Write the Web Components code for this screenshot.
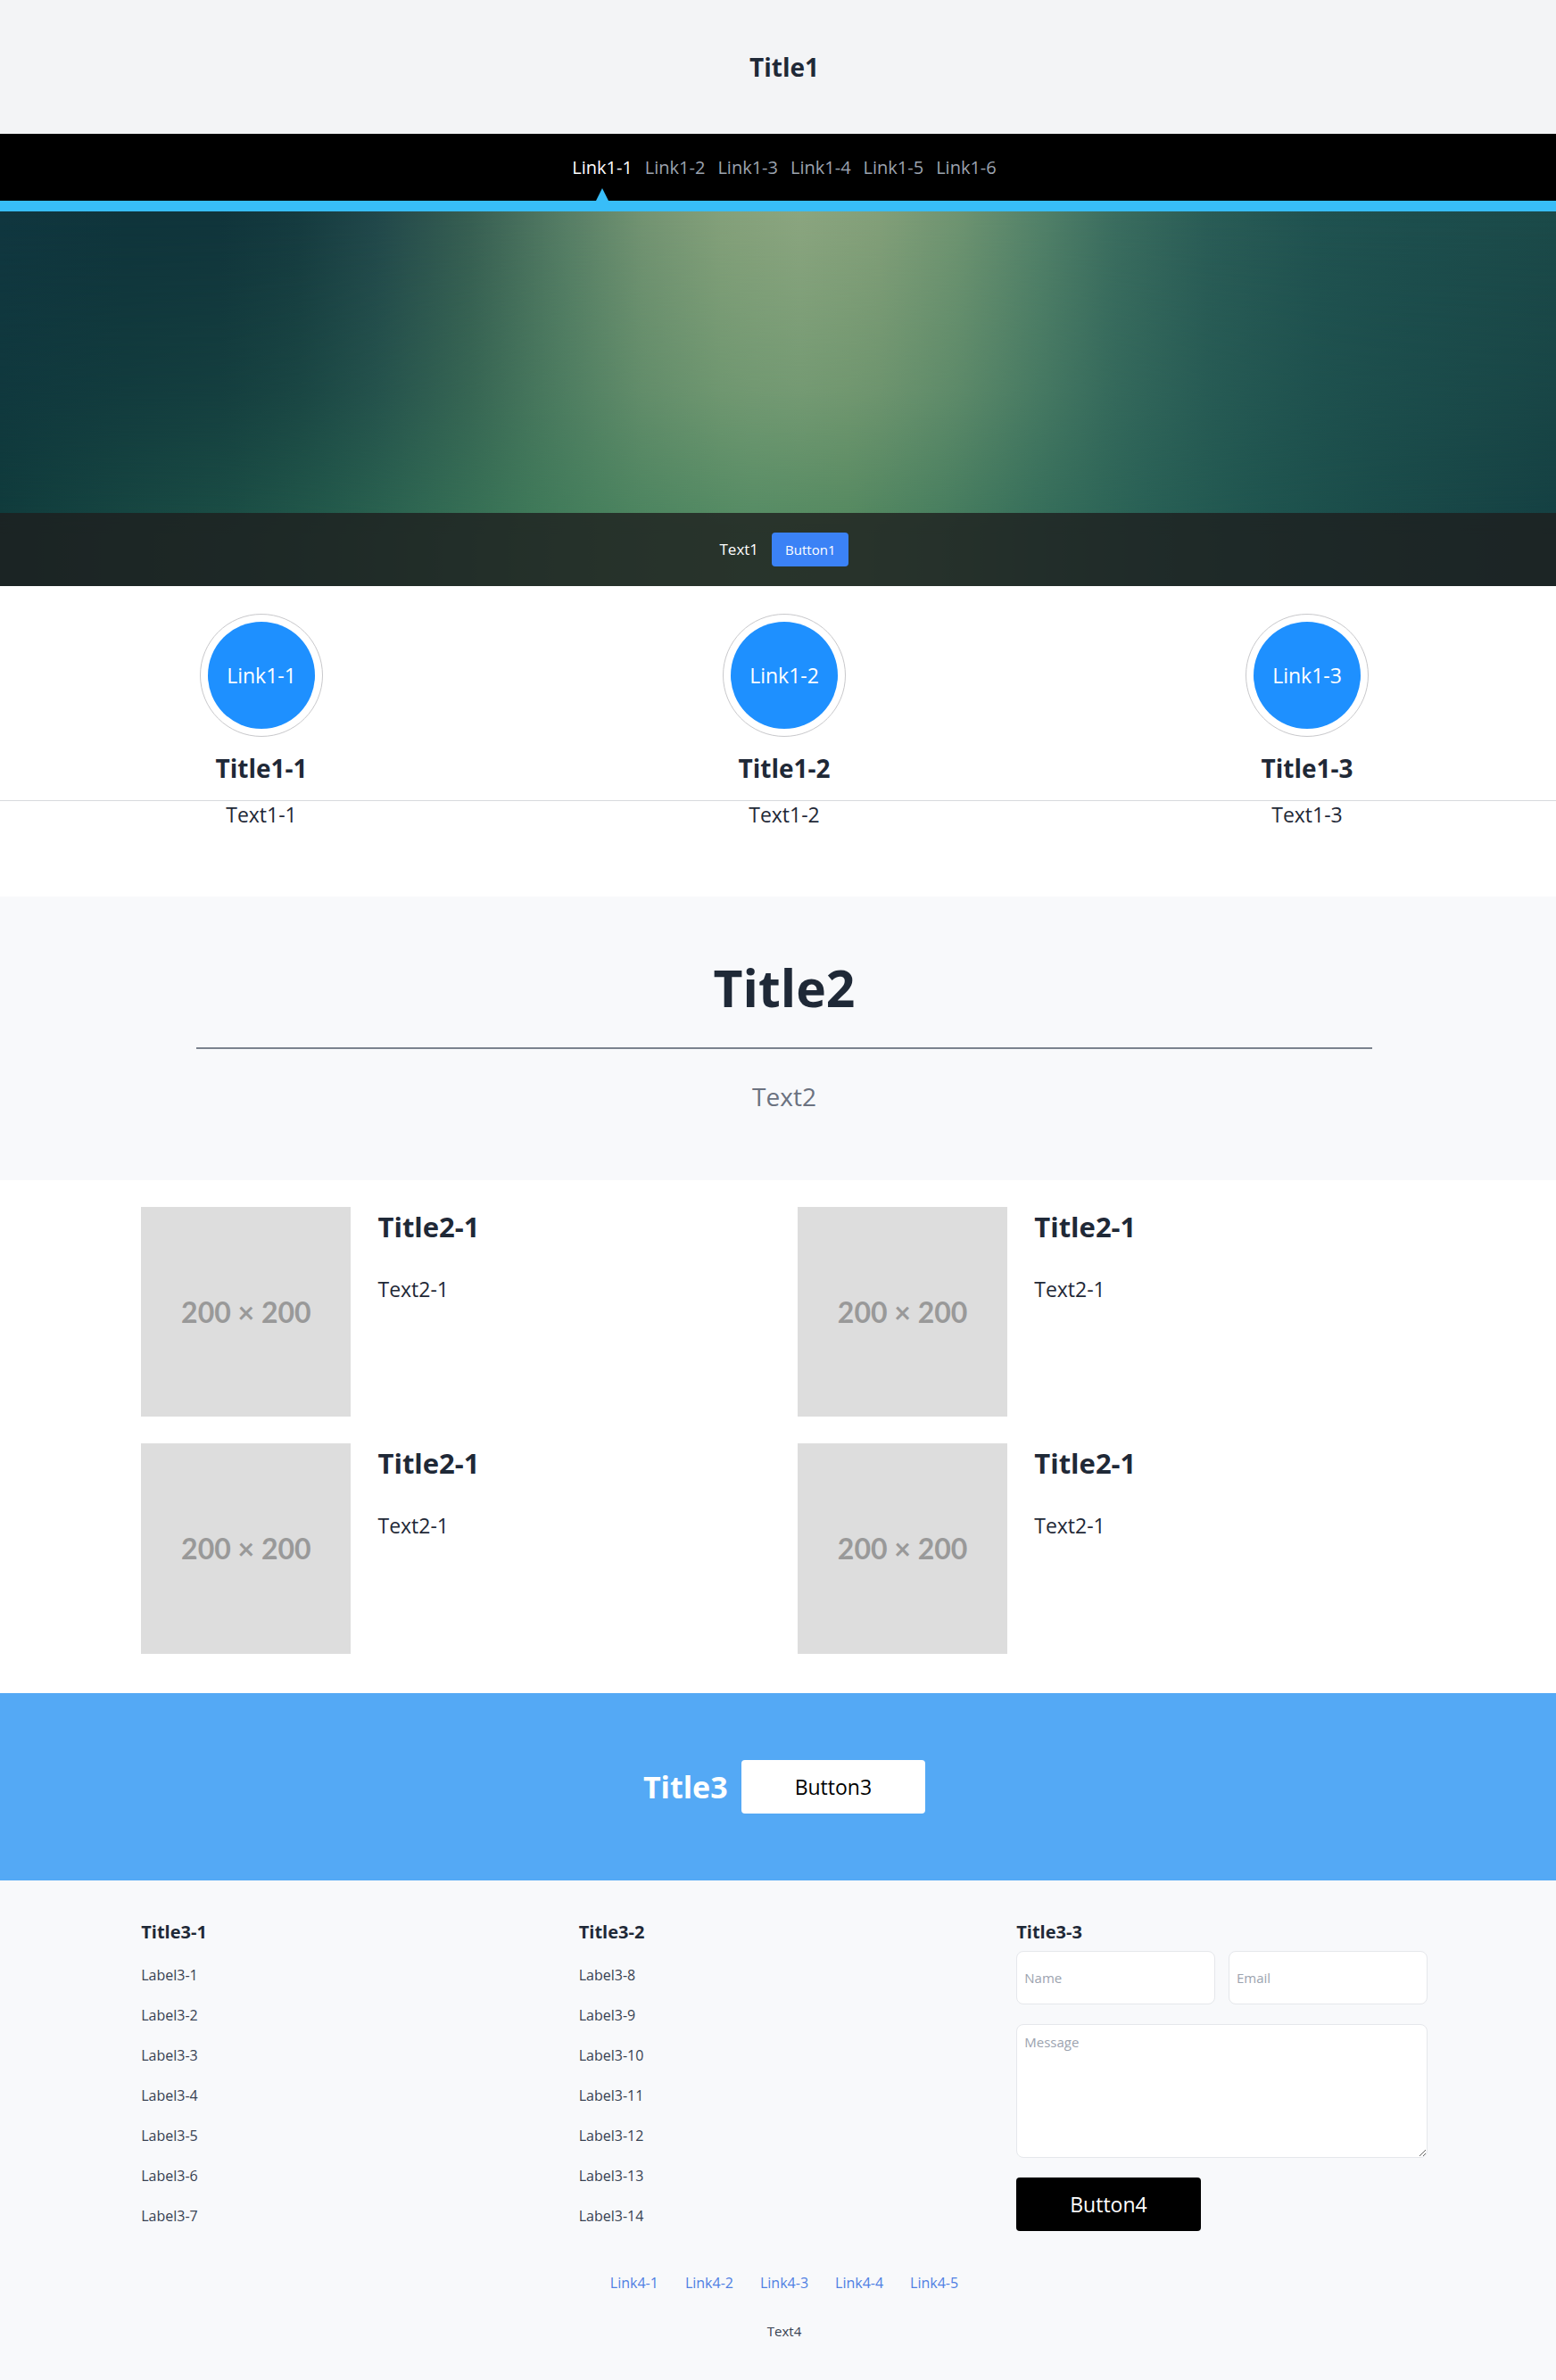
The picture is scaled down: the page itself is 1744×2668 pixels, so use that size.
<!DOCTYPE html>
<html lang="en">
<head>
<meta charset="utf-8">
<meta name="viewport" content="width=device-width, initial-scale=1">
<title>Title1</title>
<style>
  html { overflow-x: hidden; }
  body { margin: 0; overflow-x: clip; background: #fff; color: #1f2937;
    font-family: "Segoe UI", "Open Sans", "Noto Sans", sans-serif; }
</style>
</head>
<body>
<landing-page></landing-page>

<script>
const base = `
  *, *::before, *::after { box-sizing: border-box; }
  h1, h2, h3, p, ul { margin: 0; padding: 0; }
  h1, h2, h3 { font-weight: 700; }
  ul { list-style: none; }
  a { color: inherit; text-decoration: none; }
  button, input, textarea { font: inherit; margin: 0; }
  :host { display: block; }
`;

function define(name, css, html) {
  const template = document.createElement('template');
  template.innerHTML = `<style>${base}${css}</style>${html}`;
  customElements.define(name, class extends HTMLElement {
    constructor() {
      super();
      this.attachShadow({ mode: 'open' }).append(template.content.cloneNode(true));
    }
  });
}

define('site-header', `
  header { display: flex; align-items: center; justify-content: center; height: 150px; background: #f3f4f6; }
  h1 { font-size: 28px; line-height: 40px; }
`, `<header><h1><slot></slot></h1></header>`);

define('nav-link', `
  :host { display: flex; color: #9ca3af; }
  a { position: relative; display: flex; align-items: center; font-size: 20px; }
  :host([active]) { color: #fff; }
  :host([active]) a::after { content: ""; position: absolute; left: calc(50% - 7px); bottom: 0;
    border: solid transparent; border-width: 0 7px 14px; border-bottom-color: #38bdf8; }
`, `<a href="#"><slot></slot></a>`);

define('site-nav', `
  nav { display: flex; justify-content: center; gap: 14px; height: 87px;
    background: #000; border-bottom: 12px solid #38bdf8; }
`, `<nav aria-label="Main"><slot></slot></nav>`);

define('hero-banner', `
  :host { position: relative; display: flex; flex-direction: column; justify-content: flex-end; height: 420px;
    background: linear-gradient(90deg, #103c3c 0%, #174742 8%, #1c5046 15%, #245c4c 21%, #306a53 27%, #3e7a59 34%, #4a845f 41%, #538b63 48%, #52885f 54%, #457d5e 60%, #356e5a 66%, #286055 73%, #1f554f 80%, #1a4b49 88%, #143f42 100%); }
  :host::before { content: ""; position: absolute; inset: 0;
    background: linear-gradient(90deg, #10363f 0%, #0f343b 8%, #10343b 14%, #153a3f 19%, #21474a 24%, #375e52 30%, #567d65 36%, #739372 41%, #84a07a 46%, #8ba57f 51%, #839f79 56%, #6f9471 61%, #548269 66%, #3b6d5f 71%, #2a5c56 77%, #205250 84%, #1d4e4d 90%, #1b4948 100%);
    -webkit-mask-image: linear-gradient(#000, rgba(0, 0, 0, .6) 48%, transparent 86%); mask-image: linear-gradient(#000, rgba(0, 0, 0, .6) 48%, transparent 86%); }
  .caption { position: relative; display: flex; align-items: center; justify-content: center; gap: 15px;
    padding: 22px 15px; background: rgba(30, 30, 30, .8); color: #fff; }
  p { font-size: 17px; line-height: 24px; }
  button { height: 38px; padding: 0 15px; border: 0; border-radius: 4px; background: #3b82f6; color: #fff; font-size: 15px; }
`, `<div class="caption"><p><slot></slot></p><button type="button"><slot name="action"></slot></button></div>`);

define('feature-item', `
  :host { text-align: center; }
  .ring { display: inline-flex; vertical-align: top; margin: 1px; padding: 8px; border: 1px solid #c8c8cb; border-radius: 50%; }
  a { display: flex; align-items: center; justify-content: center; width: 120px; height: 120px;
    border-radius: 50%; background: #1e90ff; color: #fff; font-size: 23px; }
  h2 { padding: 15px 0 17px; border-bottom: 1px solid #d8dadd; font-size: 28px; line-height: 38px; }
  p { font-size: 23px; line-height: 30px; }
`, `<span class="ring"><a href="#"><slot name="link"></slot></a></span><h2><slot></slot></h2><p><slot name="text"></slot></p>`);

define('feature-row', `
  :host { display: grid; grid-template-columns: repeat(3, 1fr); padding: 30px 0 77px; }
`, `<slot></slot>`);

define('section-intro', `
  :host { padding: 60px 0 75px; background: #f8f9fb; text-align: center; }
  h2 { font-size: 57px; line-height: 84px; }
  hr { width: 75%; height: 2px; margin: 25px auto 34px; border: 0; background: #7b828e; }
  p { color: #6b7280; font-size: 28px; line-height: 38px; }
`, `<h2><slot></slot></h2><hr><p><slot name="text"></slot></p>`);

define('media-card', `
  :host { display: flex; gap: 30px; }
  .thumb { flex: none; display: flex; align-items: center; justify-content: center; width: calc(100% / 3); aspect-ratio: 1;
    background: #ddd; color: #999; font: 700 32px Lato, sans-serif; white-space: nowrap; }
  .body { display: flex; flex-direction: column; gap: 30px; }
  h3 { font-size: 31px; line-height: 44px; }
  p { font-size: 23px; line-height: 36px; }
`, `<div class="thumb">200 × 200</div><div class="body"><h3><slot></slot></h3><p><slot name="text"></slot></p></div>`);

define('media-grid', `
  :host { display: grid; grid-template-columns: repeat(2, 1fr); gap: 30px; width: 82%; margin: 0 auto; padding: 30px 0 44px; }
`, `<slot></slot>`);

define('action-button', `
  :host { display: flex; }
  button { height: 60px; padding: 0 60px; border: 0; border-radius: 4px; background: #fff; color: #000; font-size: 23px; }
  :host([dark]) button { background: #000; color: #fff; }
`, `<button type="button"><slot></slot></button>`);

define('call-to-action', `
  :host { display: flex; align-items: center; justify-content: center; gap: 15px; padding: 75px 0; background: #54a9f5; }
  h2 { color: #fff; font-size: 34px; line-height: 48px; }
`, `<h2><slot></slot></h2><slot name="action"></slot>`);

define('label-list', `
  h3 { margin-bottom: 13px; font-size: 20px; line-height: 26px; }
  ::slotted(ul) { margin: 0; padding: 0; list-style: none; font-size: 16px; line-height: 45px; color: #374151; }
`, `<h3><slot name="title"></slot></h3><slot></slot>`);

define('contact-form', `
  form { display: flex; flex-direction: column; align-items: flex-start; gap: 22px; }
  h3 { margin-bottom: 8px; font-size: 20px; line-height: 26px; }
  .pair { display: flex; gap: 15px; width: 100%; }
  input, textarea { display: block; width: 100%; min-width: 0; border: 1px solid #e5e7eb; border-radius: 8px;
    background: #fff; color: #1f2937; font-size: 15px; }
  input { flex: 1; height: 60px; padding: 0 8px; }
  textarea { height: 150px; padding: 8px; line-height: 22px; resize: vertical; }
  ::placeholder { color: #9ca3af; opacity: 1; }
`, `<h3><slot></slot></h3>
  <form>
    <div class="pair">
      <input type="text" placeholder="Name" aria-label="Name">
      <input type="email" placeholder="Email" aria-label="Email">
    </div>
    <textarea placeholder="Message" aria-label="Message"></textarea>
    <action-button dark>Button4</action-button>
  </form>`);

define('site-footer', `
  footer { padding: 45px 0 44px; background: #f8f9fb; line-height: 24px; }
  .columns { display: grid; grid-template-columns: repeat(3, minmax(0, 1fr)); gap: 30px; width: 82%; margin: 0 auto; }
  nav { display: flex; justify-content: center; gap: 30px; margin: 40px 0 30px; color: #4f7fe3; font-size: 16px; }
  p { text-align: center; color: #374151; font-size: 15px; }
`, `<footer>
    <div class="columns"><slot></slot></div>
    <nav aria-label="Footer"><a href="#">Link4-1</a><a href="#">Link4-2</a><a href="#">Link4-3</a><a href="#">Link4-4</a><a href="#">Link4-5</a></nav>
    <p><slot name="note"></slot></p>
  </footer>`);

/* The page runs 14px past the window's right edge. */
define('landing-page', `
  :host { width: calc(100% + 14px); }
`, `
  <site-header>Title1</site-header>
  <site-nav>
    <nav-link active>Link1-1</nav-link><nav-link>Link1-2</nav-link><nav-link>Link1-3</nav-link>
    <nav-link>Link1-4</nav-link><nav-link>Link1-5</nav-link><nav-link>Link1-6</nav-link>
  </site-nav>
  <main>
    <hero-banner>Text1<span slot="action">Button1</span></hero-banner>
    <feature-row>
      <feature-item><span slot="link">Link1-1</span>Title1-1<span slot="text">Text1-1</span></feature-item>
      <feature-item><span slot="link">Link1-2</span>Title1-2<span slot="text">Text1-2</span></feature-item>
      <feature-item><span slot="link">Link1-3</span>Title1-3<span slot="text">Text1-3</span></feature-item>
    </feature-row>
    <section-intro>Title2<span slot="text">Text2</span></section-intro>
    <media-grid>
      <media-card>Title2-1<span slot="text">Text2-1</span></media-card>
      <media-card>Title2-1<span slot="text">Text2-1</span></media-card>
      <media-card>Title2-1<span slot="text">Text2-1</span></media-card>
      <media-card>Title2-1<span slot="text">Text2-1</span></media-card>
    </media-grid>
    <call-to-action>Title3<action-button slot="action">Button3</action-button></call-to-action>
  </main>
  <site-footer>
    <label-list><span slot="title">Title3-1</span>
      <ul><li>Label3-1</li><li>Label3-2</li><li>Label3-3</li><li>Label3-4</li><li>Label3-5</li><li>Label3-6</li><li>Label3-7</li></ul>
    </label-list>
    <label-list><span slot="title">Title3-2</span>
      <ul><li>Label3-8</li><li>Label3-9</li><li>Label3-10</li><li>Label3-11</li><li>Label3-12</li><li>Label3-13</li><li>Label3-14</li></ul>
    </label-list>
    <contact-form>Title3-3</contact-form>
    <span slot="note">Text4</span>
  </site-footer>
`);
</script>
</body>
</html>
